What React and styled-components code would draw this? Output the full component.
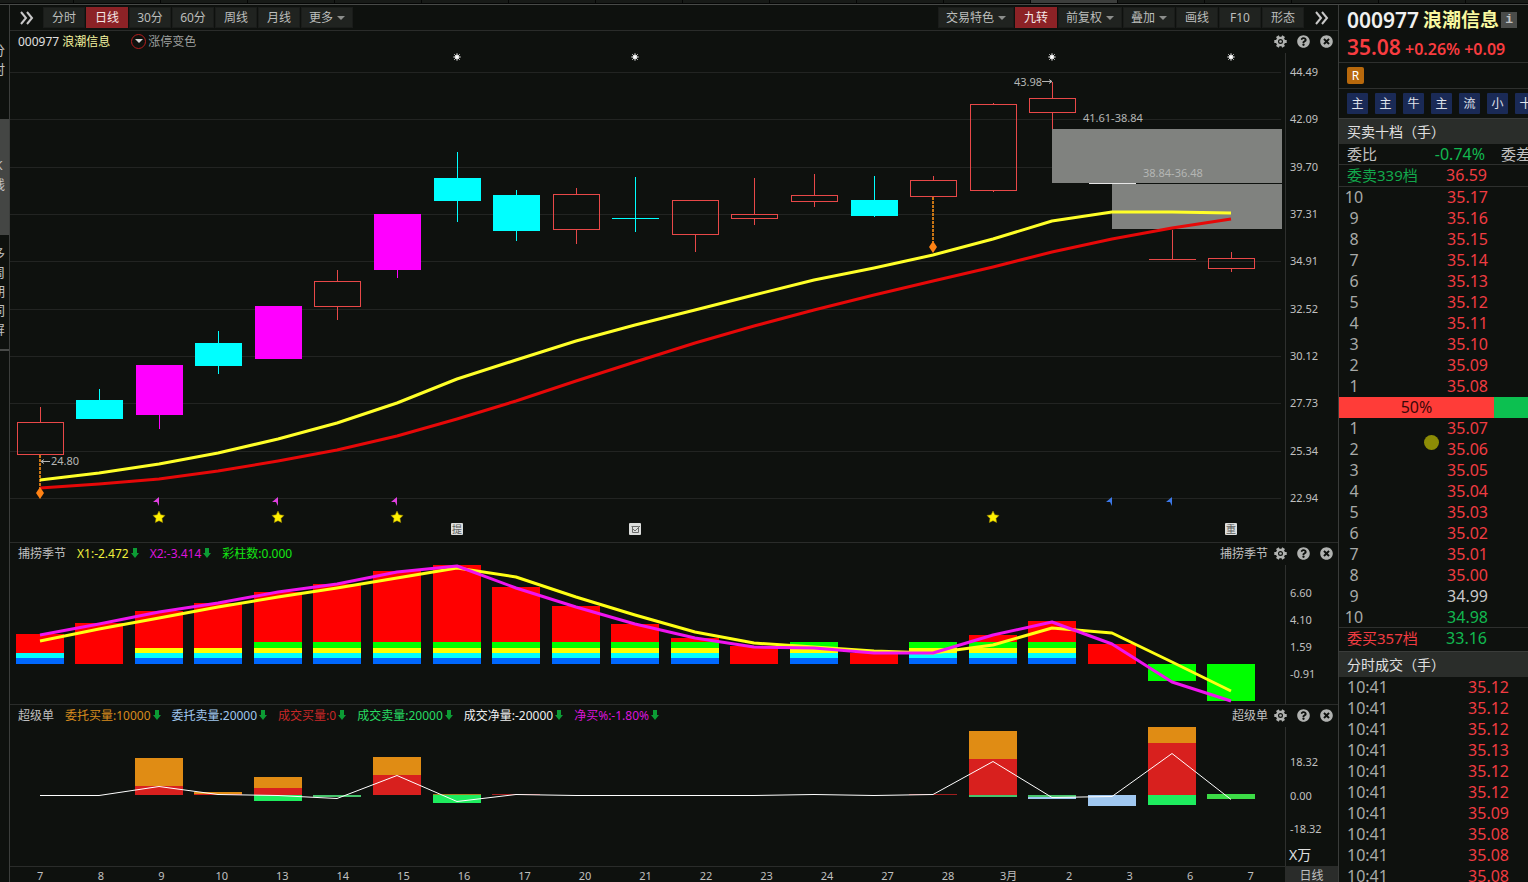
import React from "react";
import { useState } from "react";
import styled, { createGlobalStyle } from "styled-components";
import { FaQuestionCircle, FaTimesCircle } from "react-icons/fa";

const periods = ["分时", "日线", "30分", "60分", "周线", "月线"];
const dates = "7 8 9 10 13 14 15 16 17 20 21 22 23 24 27 28 3月 2 3 6 7".split(" ");
const prices = "44.49 42.09 39.70 37.31 34.91 32.52 30.12 27.73 25.34 22.94".split(" ");

const RED = "#e84848";
const CYAN = "#00ffff";
const PINK = "#ff00ff";

// [top, bottom, high, low, color, filled]
const candles = [
    [422, 455, 407, 455, RED, false],
    [400, 419, 389, 419, CYAN, true],
    [365, 415, 365, 429, PINK, true],
    [343, 366, 331, 374, CYAN, true],
    [306, 359, 306, 359, PINK, true],
    [281, 307, 270, 320, RED, false],
    [214, 270, 214, 278, PINK, true],
    [178, 201, 152, 222, CYAN, true],
    [195, 231, 190, 241, CYAN, true],
    [194, 230, 188, 244, RED, false],
    [218, 219, 177, 232, CYAN, true],
    [200, 235, 200, 252, RED, false],
    [214, 219, 178, 225, RED, false],
    [195, 202, 174, 207, RED, false],
    [200, 216, 176, 217, CYAN, true],
    [180, 197, 176, 197, RED, false],
    [104, 191, 103, 192, RED, false],
    [98, 113, 82, 129, RED, false],
    [183, 184, 183, 183, "#e6e6e6", true],
    [259, 260, 230, 260, RED, true],
    [258, 269, 252, 272, RED, false],
];
const maFast = [480, 473, 464, 453, 439, 423, 403, 379, 360, 341, 325, 310, 295, 280, 268, 255, 239, 221, 212, 212, 213];
const maSlow = [488, 484, 479, 471, 461, 450, 436, 419, 401, 381, 362, 343, 326, 310, 295, 281, 267, 252, 239, 228, 219];

// [top of the red part, number of coloured bands]
const season = [
    [634, 2], [623, 0], [611, 3], [603, 3], [592, 4], [584, 4], [571, 4],
    [565, 4], [587, 4], [606, 4], [624, 4], [638, 4], [646, 0], [642, 4],
    [653, 0], [642, 4], [635, 4], [621, 4], [644, 0], [681, -1], [701, -1],
];
const bands = [
    [658, 6, "#0068ff"],
    [653, 5, "#00ffff"],
    [648, 5, "#ffff00"],
    [642, 6, "#00ff00"],
];
const seasonX1 = [641, 629, 618, 607, 597, 588, 578, 568, 577, 597, 615, 632, 643, 647, 651, 653, 645, 628, 633, 662, 691];
const seasonX2 = [635, 624, 612, 603, 592, 584, 572, 566, 588, 607, 624, 638, 647, 648, 653, 653, 635, 622, 644, 682, 701];

// [column, top, bottom, color]
const orders = [
    [2, 758, 786, "#e08c14"], [2, 786, 795, "#d8201e"],
    [3, 792, 794, "#e08c14"], [3, 794, 795, "#d8201e"],
    [4, 777, 788, "#e08c14"], [4, 788, 795, "#d8201e"], [4, 795, 801, "#1eec5e"],
    [5, 795, 797, "#46c46c"],
    [6, 757, 775, "#e08c14"], [6, 775, 795, "#d8201e"],
    [7, 794, 795, "#a08020"], [7, 795, 803, "#1eec5e"],
    [8, 794, 795, "#a01e1e"], [15, 794, 795, "#a01e1e"],
    [16, 731, 759, "#e08c14"], [16, 759, 795, "#d8201e"], [16, 795, 797, "#46c46c"],
    [17, 795, 797, "#46c46c"], [17, 797, 799, "#a0c8f0"],
    [18, 795, 806, "#a0c8f0"],
    [19, 727, 743, "#e08c14"], [19, 743, 795, "#d8201e"], [19, 795, 805, "#1eec5e"],
    [20, 794, 799, "#3cdc46"],
];
const orderNet = [795, 795, 786, 794, 795, 798, 775, 801, 794, 795, 795, 795, 795, 794, 795, 794, 761, 797, 796, 753, 799];

const asks = [["10", "35.17"], ["9", "35.16"], ["8", "35.15"], ["7", "35.14"], ["6", "35.13"], ["5", "35.12"], ["4", "35.11"], ["3", "35.10"], ["2", "35.09"], ["1", "35.08"]];
const bids = [["1", "35.07"], ["2", "35.06"], ["3", "35.05"], ["4", "35.04"], ["5", "35.03"], ["6", "35.02"], ["7", "35.01"], ["8", "35.00"], ["9", "34.99"], ["10", "34.98"]];
const trades = ["35.12", "35.12", "35.12", "35.13", "35.12", "35.12", "35.09", "35.08", "35.08", "35.08"];

const colX = (i) => Math.round(39.5 + i * 59.58);
const toPoints = (values) => values.map((y, i) => `${colX(i)},${y}`).join(" ");
const priceColor = (p) => (Number(p) > 34.99 ? "#f03c42" : Number(p) < 34.99 ? "#12b850" : "#c8c8c8");

const Chevrons = () => (
    <svg width="14" height="14" viewBox="0 0 14 14" fill="none" stroke="#c8c8c8" strokeWidth="2">
        <path d="M1 1l5 6-5 6M7 1l5 6-5 6" />
    </svg>
);

const Gear = () => (
    <svg width="13" height="13" viewBox="-6.5 -6.5 13 13" stroke="#b0b2b0" fill="none">
        {[0, 60, 120].map((a) => (
            <path key={a} d="M-6.200 0h2.400M3.800 0h2.400" strokeWidth="3.200" transform={`rotate(${a})`} />
        ))}
        <circle r="3.600" strokeWidth="2.200" />
        <circle r="1.300" fill="#b0b2b0" stroke="none" />
    </svg>
);

const DownArrow = () => (
    <svg width="8" height="10" viewBox="0 0 8 10" fill="#0c9c34">
        <path d="M2 0h4v5h2L4 10 0 5h2z" />
    </svg>
);

function PanelTools({ title }) {
    return (
        <Tools>
            {title && <span>{title}</span>}
            <IconButton aria-label="设置"><Gear /></IconButton>
            <IconButton aria-label="帮助"><FaQuestionCircle size={13} /></IconButton>
            <IconButton aria-label="关闭"><FaTimesCircle size={13} /></IconButton>
        </Tools>
    );
}

const Sparkle = ({ x }) => (
    <g stroke="#a4a6a4">
        <path d={`M${x - 4} 57h8M${x} 53v8M${x - 3} 54l6 6M${x + 3} 54l-6 6`} />
        <circle cx={x} cy="57" r="2" fill="#ffffff" stroke="#e0e0e0" />
    </g>
);

const Star = ({ x }) => (
    <path
        transform={`translate(${x} 517)`}
        d="M0-6l1.800 3.800 4.200.6-3 3 .7 4.200L0 3.700l-3.700 1.900.7-4.200-3-3 4.200-.6z"
        fill="#fff000"
        stroke="#a08c00"
        strokeWidth=".5"
    />
);

const Flag = ({ x, color }) => (
    <path transform={`translate(${x} 501)`} d="M-4 1L2-4V5L0 1z" fill={color} />
);

const Diamond = ({ x, y }) => (
    <path d={`M${x} ${y - 6}l4 6-4 6-4-6z`} fill="#ff8214" />
);

function PriceChart() {
    return (
        <Chart viewBox="10 53 1275 489" role="img" aria-label="日线">
            {prices.map((p, i) => (
                <path key={p} d={`M10 ${Math.round(72 + i * 47.33)}.5H1281`} stroke="#222422" />
            ))}
            <rect x="1052" y="129" width="230" height="54" fill="#80827f" />
            <rect x="1112" y="184" width="170" height="45" fill="#80827f" />
            <path d="M40 455V488M933 197V242" stroke="#c87414" strokeWidth="2" strokeDasharray="3 1" />
            {candles.map(([top, bottom, high, low, color, filled], i) => {
                const x = colX(i);
                return (
                    <g key={i} stroke={color}>
                        <path d={`M${x}.5 ${high}V${top}M${x}.5 ${bottom}V${low}`} />
                        {filled ? (
                            <rect x={x - 23} y={top} width="47" height={bottom - top} fill={color} stroke="none" />
                        ) : (
                            <rect x={x - 23 + 0.5} y={top + 0.5} width="46" height={bottom - top - 1} fill="none" />
                        )}
                    </g>
                );
            })}
            <Line points={toPoints(maSlow)} stroke="#e60808" strokeWidth="3" />
            <Line points={toPoints(maFast)} stroke="#ffff28" strokeWidth="3" />
            <Diamond x={40} y={493} />
            <Diamond x={933} y={247} />
            <path d="M41 461.500h9M44 459.500l-3 2 3 2M1042 81.500h10M1049 79.500l3 2-3 2" stroke="#b4b4b4" fill="none" />
            <ChartText x="51" y="465">24.80</ChartText>
            <ChartText x="1014" y="86">43.98</ChartText>
            <ChartText x="1083" y="122">41.61-38.84</ChartText>
            <ChartText x="1143" y="177">38.84-36.48</ChartText>
            {[457, 635, 1052, 1231].map((x) => <Sparkle key={x} x={x} />)}
            {[159, 278, 397, 993].map((x) => <Star key={x} x={x} />)}
            {[157, 276, 395].map((x) => <Flag key={x} x={x} color="#e040e0" />)}
            {[1110, 1170].map((x) => <Flag key={x} x={x} color="#3c78e6" />)}
            {[451, 629, 1225].map((x) => (
                <rect key={x} x={x} y="523" width="12" height="12" rx="1" fill="#dcdedc" />
            ))}
            <BadgeText x="457" y="533">提</BadgeText>
            <path d="M631.500 526.500h7v6h-6v-6M633 529l2 2 5-5" stroke="#6a6c6a" fill="none" />
            <BadgeText x="1231" y="533">重</BadgeText>
        </Chart>
    );
}

function SeasonChart() {
    return (
        <Chart viewBox="10 565 1275 139" role="img" aria-label="捕捞季节">
            {season.map(([y, count], i) => {
                const x = colX(i) - 24;
                if (count < 0) {
                    return <rect key={i} x={x} y="664" width="48" height={y - 664} fill="#00ff00" />;
                }
                return (
                    <g key={i}>
                        <rect x={x} y={y} width="48" height={664 - y} fill="#ff0000" />
                        {bands.slice(0, count).map(([top, h, color]) => (
                            <rect key={top} x={x} y={top} width="48" height={h} fill={color} />
                        ))}
                    </g>
                );
            })}
            <Line points={toPoints(seasonX1)} stroke="#ffff14" strokeWidth="3" />
            <Line points={toPoints(seasonX2)} stroke="#f014f0" strokeWidth="3" />
        </Chart>
    );
}

function OrderChart() {
    return (
        <Chart viewBox="10 727 1275 139" role="img" aria-label="超级单">
            {orders.map(([i, top, bottom, color]) => (
                <rect key={`${i}-${top}`} x={colX(i) - 24} y={top} width="48" height={bottom - top} fill={color} />
            ))}
            <Line points={toPoints(orderNet)} stroke="#ffffff" strokeWidth="1" transform="translate(0 .5)" />
        </Chart>
    );
}

function App() {
    const [period, setPeriod] = useState("日线");

    return (
        <Page>
            <GlobalStyle />
            <TopStrip>
                {Array.from({ length: 18 }, (_, i) => (
                    <StripTab key={i} $active={i === 12} $first={i === 0} />
                ))}
            </TopStrip>
            <Main>
                <Rail>
                    <RailItem $bottom={32}>分<br />时</RailItem>
                    <RailItem $active $bottom={4}>K<br />线</RailItem>
                    <RailItem $last $bottom={2}>多<br />周<br />期<br />同<br />屏</RailItem>
                </Rail>
                <Center>
                    <Toolbar>
                        <Group>
                            <MoreButton aria-label="展开"><Chevrons /></MoreButton>
                            {periods.map((p) => (
                                <ToolButton key={p} $active={p === period} onClick={() => setPeriod(p)}>{p}</ToolButton>
                            ))}
                            <ToolButton aria-haspopup="menu">更多<Caret /></ToolButton>
                        </Group>
                        <Group>
                            <ToolButton aria-haspopup="menu">交易特色<Caret /></ToolButton>
                            <ToolButton $active>九转</ToolButton>
                            <ToolButton aria-haspopup="menu">前复权<Caret /></ToolButton>
                            <ToolButton aria-haspopup="menu">叠加<Caret /></ToolButton>
                            <ToolButton>画线</ToolButton>
                            <ToolButton>F10</ToolButton>
                            <ToolButton>形态</ToolButton>
                            <MoreButton aria-label="展开"><Chevrons /></MoreButton>
                        </Group>
                    </Toolbar>
                    <Panel $grow={511}>
                        <PanelHead>
                            <Code>000977 <em>浪潮信息</em></Code>
                            <Tag><RoundButton aria-label="涨停变色选项"><Caret $light /></RoundButton>涨停变色</Tag>
                            <PanelTools />
                        </PanelHead>
                        <PanelBody>
                            <PriceChart />
                            <Axis>
                                <Scale $top={11} $bottom={36}>
                                    {prices.map((p) => <span key={p}>{p}</span>)}
                                </Scale>
                            </Axis>
                        </PanelBody>
                    </Panel>
                    <Panel $grow={161}>
                        <PanelHead>
                            <Legend $color="#c0c0c0">捕捞季节</Legend>
                            <Legend $color="#f0f03c">X1:-2.472<DownArrow /></Legend>
                            <Legend $color="#dc14dc">X2:-3.414<DownArrow /></Legend>
                            <Legend $color="#14e614">彩柱数:0.000</Legend>
                            <PanelTools title="捕捞季节" />
                        </PanelHead>
                        <PanelBody>
                            <SeasonChart />
                            <Axis>
                                <Scale $top={20} $bottom={22}>
                                    <span>6.60</span>
                                    <span>4.10</span>
                                    <span>1.59</span>
                                    <span>-0.91</span>
                                </Scale>
                            </Axis>
                        </PanelBody>
                    </Panel>
                    <Panel $grow={161}>
                        <PanelHead>
                            <Legend $color="#c0c0c0">超级单</Legend>
                            <Legend $color="#d88c1e">委托买量:10000<DownArrow /></Legend>
                            <Legend $color="#a0c8f0">委托卖量:20000<DownArrow /></Legend>
                            <Legend $color="#c82828">成交买量:0<DownArrow /></Legend>
                            <Legend $color="#28dc64">成交卖量:20000<DownArrow /></Legend>
                            <Legend $color="#f0f0f0">成交净量:-20000<DownArrow /></Legend>
                            <Legend $color="#dc14dc">净买%:-1.80%<DownArrow /></Legend>
                            <PanelTools title="超级单" />
                        </PanelHead>
                        <PanelBody>
                            <OrderChart />
                            <Axis>
                                <Scale $top={27} $bottom={10}>
                                    <span>18.32</span>
                                    <span>0.00</span>
                                    <span>-18.32</span>
                                </Scale>
                                <Unit>X万</Unit>
                            </Axis>
                        </PanelBody>
                    </Panel>
                    <DateRow>
                        <Dates>
                            {dates.map((d, i) => <span key={i}>{d}</span>)}
                        </Dates>
                        <DateUnit>日线</DateUnit>
                    </DateRow>
                </Center>
                <Side>
                    <Quote>
                        <h1>000977 <em>浪潮信息</em><Info aria-label="信息">i</Info></h1>
                        <p><strong>35.08</strong> +0.26% +0.09</p>
                    </Quote>
                    <MarginRow><Margin>R</Margin></MarginRow>
                    <Tags>
                        {["主", "主", "牛", "主", "流", "小", "十"].map((t, i) => (
                            <TagButton key={i}>{t}</TagButton>
                        ))}
                    </Tags>
                    <SideTitle>买卖十档（手）</SideTitle>
                    <Ratio>
                        <span>委比</span>
                        <b>-0.74%</b>
                        <span>委差</span>
                    </Ratio>
                    <Total $label="#12a84c" $value="#f03c42"><span>委卖339档</span><b>36.59</b></Total>
                    <Book>
                        <tbody>
                            {asks.map(([n, p]) => (
                                <tr key={n}><th scope="row">{n}</th><Price $color="#f03c42">{p}</Price><td /></tr>
                            ))}
                        </tbody>
                    </Book>
                    <Balance><div>50%</div><i /></Balance>
                    <BidArea>
                        <Book>
                            <tbody>
                                {bids.map(([n, p]) => (
                                    <tr key={n}><th scope="row">{n}</th><Price $color={priceColor(p)}>{p}</Price><td /></tr>
                                ))}
                            </tbody>
                        </Book>
                        <Pointer />
                    </BidArea>
                    <Total $top $label="#f03c42" $value="#12b850"><span>委买357档</span><b>33.16</b></Total>
                    <SideTitle>分时成交（手）</SideTitle>
                    <Trades>
                        <tbody>
                            {trades.map((p, i) => (
                                <tr key={i}><td>10:41</td><Price $color="#f03c42">{p}</Price></tr>
                            ))}
                        </tbody>
                    </Trades>
                </Side>
            </Main>
        </Page>
    );
}

const GlobalStyle = createGlobalStyle`
    * {
        box-sizing: border-box;
    }
    body {
        margin: 0;
        background: #0e110e;
        color: #c0c0c0;
        font-family: "Noto Sans", "Noto Sans CJK SC", sans-serif;
        font-size: 12px;
    }
    button {
        border: 0;
        padding: 0;
        background: none;
        color: inherit;
        font: inherit;
        cursor: pointer;
    }
    em, b, i {
        font-style: normal;
        font-weight: 400;
    }
    svg {
        display: block;
    }
`;

const Page = styled.div`
    display: flex;
    flex-direction: column;
    height: 100vh;
    overflow: hidden;
`;

const TopStrip = styled.div`
    display: flex;
    flex: none;
    gap: 1px;
    height: 5px;
    padding-bottom: 1px;
    background: #050605;
    border-bottom: 1px solid #484a48;
`;

const StripTab = styled.span`
    flex: none;
    width: ${(p) => (p.$first ? 73 : 86)}px;
    background: ${(p) => (p.$active ? "#3c3e3c" : "#171a17")};
`;

const Main = styled.main`
    display: grid;
    grid-template-columns: 10px minmax(0, 1fr) 190px;
    flex: 1;
    min-height: 0;
`;

const Rail = styled.nav`
    display: flex;
    flex-direction: column;
    overflow: hidden;
    border-right: 1px solid #3c3e3c;
    padding-top: 28px;
`;

const RailItem = styled.button`
    display: flex;
    flex: none;
    justify-content: flex-end;
    align-items: center;
    height: ${(p) => (p.$active || p.$last ? 116 : 86)}px;
    padding-right: 4px;
    padding-bottom: ${(p) => p.$bottom}px;
    line-height: 19px;
    font-size: 13px;
    background: ${(p) => (p.$active ? "#444644" : "none")};
    border-bottom: ${(p) => (p.$last ? "2px solid #484a48" : "0")};
`;

const Center = styled.section`
    display: flex;
    flex-direction: column;
    min-width: 0;
`;

const Toolbar = styled.div`
    display: flex;
    flex: none;
    justify-content: space-between;
    height: 26px;
    padding: 2px 9px 2px 0;
    border-bottom: 1px solid #2a2c2a;
`;

const Group = styled.div`
    display: flex;
    gap: 1px;
`;

const ToolButton = styled.button`
    display: flex;
    align-items: center;
    justify-content: center;
    gap: 4px;
    min-width: 42px;
    padding: 0 7px;
    line-height: 20px;
    color: ${(p) => (p.$active ? "#f4e8e8" : "#bcbebc")};
    background: ${(p) => (p.$active ? "#8c2226" : "#202320")};
    border: 1px solid ${(p) => (p.$active ? "#8c2226" : "#1a1c1a")};
`;

const MoreButton = styled.button`
    padding: 0 0 0 10px;
    & + button {
        margin-left: 8px;
    }
`;

const Caret = styled.i`
    border: 4px solid transparent;
    border-top-color: ${(p) => (p.$light ? "#d8d8d8" : "#8c8e8c")};
    border-bottom: 0;
`;

const Panel = styled.section`
    display: flex;
    flex-direction: column;
    flex: ${(p) => p.$grow} 1 0;
    min-height: 0;
    border-bottom: 1px solid #2a2c2a;
`;

const PanelHead = styled.header`
    display: flex;
    flex: none;
    align-items: center;
    gap: 11px;
    height: 22px;
    padding: 0 5px 2px 8px;
    white-space: nowrap;
`;

const Code = styled.span`
    margin-right: 10px;
    color: #e0e0e0;
    em {
        color: #f4f4a0;
    }
`;

const Tag = styled.span`
    display: flex;
    align-items: center;
    gap: 2px;
    color: #9c9e9c;
`;

const RoundButton = styled.button`
    display: grid;
    place-items: center;
    width: 15px;
    height: 15px;
    border: 1px solid #b41e1e;
    border-radius: 50%;
`;

const Legend = styled.span`
    display: flex;
    align-items: center;
    gap: 2px;
    color: ${(p) => p.$color};
`;

const Tools = styled.div`
    display: flex;
    align-items: center;
    gap: 10px;
    margin-left: auto;
    span {
        margin-right: -4px;
    }
`;

const IconButton = styled.button`
    color: #b0b2b0;
`;

const PanelBody = styled.div`
    display: flex;
    flex: 1;
    min-height: 0;
`;

const Chart = styled.svg`
    flex: 1;
    min-width: 0;
    height: 100%;
    overflow: visible;
`;

const Line = styled.polyline`
    fill: none;
    stroke-linejoin: round;
`;

const ChartText = styled.text`
    fill: #b4b6b4;
    font-size: 11px;
`;

const BadgeText = styled.text`
    fill: #5c5e5c;
    font-size: 10px;
    text-anchor: middle;
`;

const Axis = styled.div`
    display: flex;
    flex-direction: column;
    flex: none;
    width: 53px;
    border-left: 1px solid #2e302e;
`;

const Scale = styled.div`
    display: flex;
    flex: 1;
    flex-direction: column;
    justify-content: space-between;
    padding: ${(p) => p.$top}px 0 ${(p) => p.$bottom}px 4px;
    font-size: 11px;
    line-height: 16px;
`;

const Unit = styled.div`
    padding: 0 0 3px 3px;
    font-size: 14px;
    line-height: 16px;
    color: #e0e0e0;
`;

const DateRow = styled.footer`
    display: flex;
    flex: none;
    height: 15px;
    overflow: hidden;
    font-size: 11px;
    line-height: 17px;
    text-align: center;
`;

const Dates = styled.div`
    display: grid;
    grid-template-columns: repeat(21, 1fr);
    flex: 1;
    padding-right: 4px;
`;

const DateUnit = styled.div`
    flex: none;
    width: 53px;
    font-size: 12px;
    background: #2a2c2a;
`;

const Side = styled.aside`
    overflow: hidden;
    border-left: 1px solid #3a3c3a;
    white-space: nowrap;
    font-size: 16px;
    line-height: 21px;
`;

const Quote = styled.header`
    height: 58px;
    padding: 1px 0 0 8px;
    border-bottom: 1px solid #2e302e;
    h1 {
        display: flex;
        align-items: center;
        gap: 4px;
        margin: 0;
        font-size: 21px;
        line-height: 28px;
        font-weight: 600;
        color: #f0f0f0;
    }
    em {
        font-size: 19px;
        font-weight: 600;
        color: #f8f8a0;
    }
    p {
        margin: 0;
        font-size: 16px;
        line-height: 26px;
        font-weight: 600;
        color: #f83c40;
    }
    strong {
        font-size: 21px;
        font-weight: 600;
    }
`;

const Info = styled.button`
    width: 16px;
    height: 16px;
    margin-left: -2px;
    background: #4a4c4a;
    color: #c0c0c0;
    font-family: "Liberation Mono", monospace;
    font-size: 13px;
    line-height: 16px;
    font-weight: 700;
`;

const MarginRow = styled.div`
    display: flex;
    align-items: center;
    height: 26px;
    padding-left: 8px;
    border-bottom: 1px solid #2e302e;
`;

const Margin = styled.span`
    width: 17px;
    height: 17px;
    border-radius: 2px;
    background: #b8690c;
    color: #ffffff;
    font-size: 12px;
    line-height: 17px;
    text-align: center;
`;

const Tags = styled.div`
    display: flex;
    align-items: center;
    gap: 7px;
    height: 29px;
    padding-left: 8px;
`;

const TagButton = styled.button`
    flex: none;
    width: 21px;
    height: 21px;
    border-radius: 1px;
    background: #1a2a56;
    color: #e0e4ec;
    font-size: 12px;
    line-height: 21px;
`;

const SideTitle = styled.h2`
    margin: 0;
    padding-left: 8px;
    height: 26px;
    border-top: 1px solid #3a3c3a;
    background: #2a2d2a;
    color: #e0e0e0;
    font-size: 14px;
    line-height: 25px;
    font-weight: 400;
`;

const Ratio = styled.div`
    display: grid;
    grid-template-columns: 50px 104px 40px;
    height: 21px;
    padding-left: 8px;
    font-size: 15px;
    border-bottom: 1px solid #2e302e;
    b {
        padding-right: 16px;
        font-size: 16px;
        text-align: right;
        color: #12b850;
    }
`;

const Total = styled.div`
    display: grid;
    grid-template-columns: 80px 60px;
    height: ${(p) => (p.$top ? 24 : 22)}px;
    padding-left: 8px;
    border-${(p) => (p.$top ? "top" : "bottom")}: 1px solid #2e302e;
    span {
        font-size: 15px;
        color: ${(p) => p.$label};
    }
    b {
        text-align: right;
        color: ${(p) => p.$value};
    }
`;

const Book = styled.table`
    width: 100%;
    border-collapse: collapse;
    table-layout: fixed;
    tr {
        height: 21px;
    }
    th {
        width: 30px;
        padding: 0;
        font-weight: 400;
        color: #a8aaa8;
    }
    td:last-child {
        width: 40px;
    }
`;

const Price = styled.td`
    padding: 0;
    text-align: right;
    color: ${(p) => p.$color};
`;

const Balance = styled.div`
    display: flex;
    height: 21px;
    text-align: center;
    div {
        flex: 155;
        background: #ff3c38;
        color: #3c0808;
    }
    i {
        flex: 34;
        background: #0cc050;
    }
`;

const BidArea = styled.div`
    position: relative;
    height: 209px;
`;

const Pointer = styled.span`
    position: absolute;
    top: 17px;
    left: 85px;
    width: 15px;
    height: 15px;
    border-radius: 50%;
    background: #8c8c06;
`;

const Trades = styled.table`
    width: 100%;
    border-collapse: collapse;
    color: #a8aaa8;
    tr {
        height: 21px;
    }
    td {
        padding: 0 0 0 8px;
    }
    td:last-child {
        padding-right: 19px;
    }
`;

export default App;
